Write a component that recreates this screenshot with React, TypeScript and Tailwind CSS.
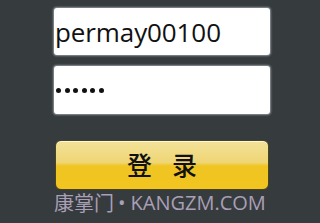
export default function App() {
  return (
    <div
      className="w-[320px] h-[223px] overflow-hidden bg-[#363b3d] pl-[54px] pt-[8px]"
      style={{ fontFamily: '"Open Sans", "Noto Sans CJK SC", sans-serif' }}
    >
      <div className="w-[216px] flex flex-col">
        <div className="h-[47px] rounded-[3px] bg-white shadow-[0_0_2px_1px_rgba(200,210,220,0.6)] flex items-center pl-[1px]">
          <span className="text-[26px] leading-none text-[#111] tracking-[-0.1px]">permay00100</span>
        </div>
        <div className="mt-[11px] h-[48px] rounded-[3px] bg-white shadow-[0_0_2px_1px_rgba(200,210,220,0.6)] flex items-center pl-[2px]">
          <div className="flex gap-[3.5px]">
            {[0, 1, 2, 3, 4, 5].map(i => (
              <span key={i} className="w-[5px] h-[5px] rounded-full bg-[#111]" />
            ))}
          </div>
        </div>
        <button
          className="mt-[26px] ml-[1px] w-[214px] h-[50px] rounded-[6px] border border-[#4a4420] flex items-center justify-center gap-[20px] text-[25px] font-medium text-[#111] bg-[linear-gradient(to_bottom,#f2e29a_0%,#efd574_45%,#f0c522_52%,#f2c520_100%)] shadow-[inset_0_1px_0_rgba(255,255,240,0.8)]"
          style={{ fontFamily: '"Noto Sans CJK SC", sans-serif' }}
        >
          <span>登</span>
          <span>录</span>
        </button>
        <div className="mt-[1px] flex items-center leading-[24px] text-[#a99fb6] whitespace-nowrap">
          <span className="text-[20px]" style={{ fontFamily: '"Noto Sans CJK SC", sans-serif' }}>康掌门</span>
          <span className="text-[20px] ml-[4px] mr-[5px]" style={{ fontFamily: '"Open Sans", sans-serif' }}>•</span>
          <span className="text-[20px]" style={{ fontFamily: '"Open Sans", sans-serif' }}>KANGZM.COM</span>
        </div>
      </div>
    </div>
  );
}
